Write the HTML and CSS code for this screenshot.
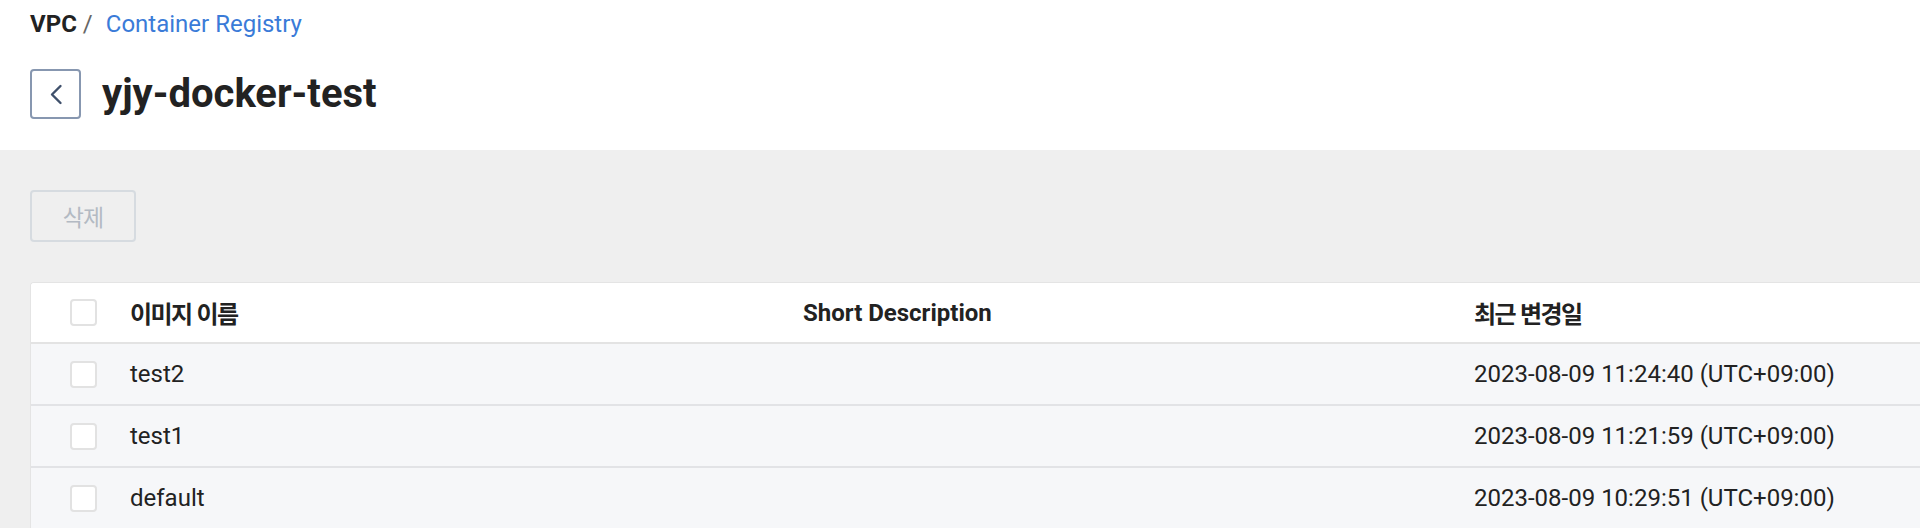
FILE: index.html
```html
<!DOCTYPE html>
<html lang="ko">
<head>
<meta charset="utf-8">
<title>yjy-docker-test</title>
<link rel="stylesheet" href="styles.css">
</head>
<body>
<div class="page">
  <header class="header">
    <nav class="crumbs">
      <span class="crumb-root">VPC</span><span class="crumb-sep">/</span><a class="crumb-link" href="#">Container Registry</a>
    </nav>
    <div class="title-row">
      <button class="back-btn" type="button" aria-label="back">
        <svg width="14" height="21" viewBox="0 0 14 21"><path d="M11.5 2 L3 10.5 L11.5 19" fill="none" stroke="#3f506b" stroke-width="2.4" stroke-linecap="round" stroke-linejoin="round"/></svg>
      </button>
      <h1 class="title">yjy-docker-test</h1>
    </div>
  </header>
  <main class="content">
    <button class="del-btn" type="button" disabled><span class="ko">삭제</span></button>
    <div class="card">
      <div class="row head">
        <div class="cell chk"><span class="box"></span></div>
        <div class="cell"><span class="ko">이미지 이름</span></div>
        <div class="cell">Short Description</div>
        <div class="cell"><span class="ko">최근 변경일</span></div>
      </div>
      <div class="row">
        <div class="cell chk"><span class="box"></span></div>
        <div class="cell">test2</div>
        <div class="cell"></div>
        <div class="cell">2023-08-09 11:24:40 (UTC+09:00)</div>
      </div>
      <div class="row">
        <div class="cell chk"><span class="box"></span></div>
        <div class="cell">test1</div>
        <div class="cell"></div>
        <div class="cell">2023-08-09 11:21:59 (UTC+09:00)</div>
      </div>
      <div class="row">
        <div class="cell chk"><span class="box"></span></div>
        <div class="cell">default</div>
        <div class="cell"></div>
        <div class="cell">2023-08-09 10:29:51 (UTC+09:00)</div>
      </div>
    </div>
  </main>
</div>
</body>
</html>
```

FILE: styles.css
```css
* { box-sizing: border-box; }
html, body { margin: 0; padding: 0; }
body {
  width: 1920px;
  height: 528px;
  overflow: hidden;
  background: #efefef;
  font-family: Roboto, "Noto Sans CJK KR", sans-serif;
  color: #222;
}
.page { width: 1920px; overflow: hidden; }
.ko { font-family: "Noto Sans CJK KR", Roboto, sans-serif; letter-spacing: -1.6px; }

.header {
  background: #fff;
  padding: 6px 30px 31px;
}
.crumbs {
  font-size: 24px;
  line-height: 36px;
  display: flex;
  align-items: baseline;
}
.crumb-root { font-weight: 700; color: #222; }
.crumb-sep { color: #666; margin: 0 13px 0 6px; }
.crumb-link { color: #3a7bd8; text-decoration: none; }

.title-row {
  margin-top: 27px;
  display: flex;
  align-items: center;
  gap: 21px;
  height: 50px;
}
.back-btn {
  width: 51px;
  height: 50px;
  border: 2px solid #8797b0;
  border-radius: 4px;
  background: #fff;
  padding: 0;
  display: flex;
  align-items: center;
  justify-content: center;
}
.title {
  margin: 0;
  font-size: 40px;
  line-height: 50px;
  font-weight: 700;
  color: #222;
}

.content {
  padding: 40px 0 0 30px;
}
.del-btn {
  display: flex;
  align-items: center;
  justify-content: center;
  width: 106px;
  height: 52px;
  border: 2px solid #d6dbe0;
  border-radius: 4px;
  background: #efefef;
  color: #b3bac3;
  font-size: 23px;
  padding: 0;
}
.del-btn .ko { letter-spacing: -1px; }
.card {
  margin-top: 40px;
  width: 2130px;
  background: #f6f7f9;
  border-top: 1px solid #e4e4e4;
  border-left: 1px solid #e4e4e4;
  border-radius: 4px 0 0 0;
  overflow: hidden;
}
.row {
  display: grid;
  grid-template-columns: 99px 673px 671px 1fr;
  height: 62px;
  border-bottom: 2px solid #e2e3e6;
  font-size: 24px;
}
.row.head {
  height: 61px;
  background: #fff;
  font-weight: 700;
  border-bottom: 2px solid #e3e3e3;
}
.cell {
  display: flex;
  align-items: center;
  white-space: nowrap;
}
.chk { padding-left: 39px; }
.box {
  width: 27px;
  height: 27px;
  border: 2px solid #e2e2e2;
  border-radius: 4px;
  background: #fff;
}
```
